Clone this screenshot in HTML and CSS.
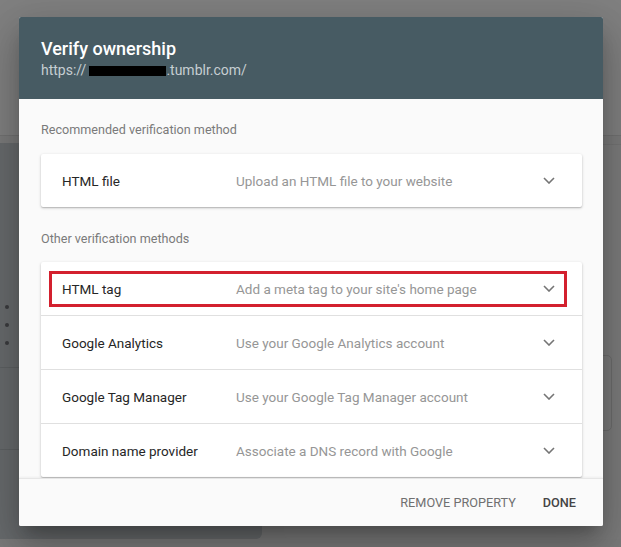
FILE: index.html
```html
<!DOCTYPE html>
<html lang="en">
<head>
<meta charset="utf-8">
<title>Verify ownership</title>
<link rel="stylesheet" href="styles.css">
</head>
<body>
<div class="page">
  <div class="page-top"></div>
  <div class="page-main">
    <div class="page-left">
      <ul class="bullets"><li></li><li></li><li></li></ul>
      <div class="page-left-row"><span class="ghost">E</span></div>
    </div>
    <div class="page-right">
      <div class="page-right-box"></div>
    </div>
  </div>
</div>

<div class="dialog" role="dialog" aria-labelledby="dlg-title">
  <header class="dialog-head">
    <h1 id="dlg-title" class="dialog-title">Verify ownership</h1>
    <div class="dialog-url">https://<span class="redact"></span>.tumblr.com/</div>
  </header>

  <div class="dialog-body">
    <div class="section-label">Recommended verification method</div>
    <div class="card">
      <div class="row">
        <span class="row-name">HTML file</span>
        <span class="row-desc">Upload an HTML file to your website</span>
        <svg class="chev" viewBox="0 0 12 7" width="12" height="7"><polyline points="1,1 6,6 11,1"/></svg>
      </div>
    </div>

    <div class="section-label second">Other verification methods</div>
    <div class="card">
      <div class="row">
        <span class="row-name">HTML tag</span>
        <span class="row-desc">Add a meta tag to your site's home page</span>
        <svg class="chev" viewBox="0 0 12 7" width="12" height="7"><polyline points="1,1 6,6 11,1"/></svg>
        <span class="highlight"></span>
      </div>
      <div class="row">
        <span class="row-name">Google Analytics</span>
        <span class="row-desc">Use your Google Analytics account</span>
        <svg class="chev" viewBox="0 0 12 7" width="12" height="7"><polyline points="1,1 6,6 11,1"/></svg>
      </div>
      <div class="row">
        <span class="row-name">Google Tag Manager</span>
        <span class="row-desc">Use your Google Tag Manager account</span>
        <svg class="chev" viewBox="0 0 12 7" width="12" height="7"><polyline points="1,1 6,6 11,1"/></svg>
      </div>
      <div class="row">
        <span class="row-name">Domain name provider</span>
        <span class="row-desc">Associate a DNS record with Google</span>
        <svg class="chev" viewBox="0 0 12 7" width="12" height="7"><polyline points="1,1 6,6 11,1"/></svg>
      </div>
    </div>
  </div>

  <footer class="dialog-foot">
    <button class="btn btn-muted" type="button">Remove property</button>
    <button class="btn btn-done" type="button">Done</button>
  </footer>
</div>
</body>
</html>
```

FILE: styles.css
```css
* { box-sizing: border-box; }

html, body {
  margin: 0;
  padding: 0;
  width: 621px;
  height: 547px;
  overflow: hidden;
  font-family: Roboto, "Liberation Sans", Arial, sans-serif;
  background: #7a7a7a;
}

/* dimmed page behind the dialog */
.page {
  width: 621px;
  height: 547px;
  display: flex;
  flex-direction: column;
  background: #7b7b7b;
}
.page-top {
  height: 136px;
  flex: none;
  background: #808080;
  border-bottom: 1px solid #727272;
}
.page-main {
  flex: 1;
  display: flex;
  gap: 22px;
  padding-bottom: 8px;
}
.page-left {
  width: 262px;
  margin-top: 7px;
  background: #686b6d;
  border-bottom-right-radius: 6px;
  display: flex;
  flex-direction: column;
}
.bullets {
  list-style: none;
  margin: 0;
  padding: 162px 0 0 5px;
  display: flex;
  flex-direction: column;
  gap: 14px;
  height: 225px;
  border-bottom: 1px solid #5e6163;
}
.bullets li {
  width: 4px;
  height: 4px;
  border-radius: 50%;
  background: #3a3c3e;
}
.page-left-row {
  height: 82px;
  border-bottom: 1px solid #5e6163;
  padding: 30px 0 0 40px;
}
.ghost {
  color: #4a4c4e;
  font-size: 13px;
}
.page-right {
  flex: 1;
  margin-top: 8px;
  padding: 210px 9px 0 0;
  display: flex;
  justify-content: flex-end;
  background: #7c7c7c;
  border-bottom-left-radius: 6px;
  border-top: 1px solid #747474;
}
.page-right-box {
  width: 30px;
  height: 76px;
  border: 1px solid #6e6e6e;
  border-radius: 5px;
}

/* dialog */
.dialog {
  position: absolute;
  left: 19px;
  top: 17px;
  width: 584px;
  height: 509px;
  background: #fafafa;
  display: flex;
  flex-direction: column;
  overflow: hidden;
  border-radius: 2px;
  box-shadow: 0 11px 15px -7px rgba(0,0,0,.25), 0 24px 38px 3px rgba(0,0,0,.16), 0 9px 46px 8px rgba(0,0,0,.12);
}
.dialog-head {
  flex: none;
  height: 82px;
  background: #475b63;
  padding: 21px 22px 0;
}
.dialog-title {
  margin: 0;
  font-size: 18px;
  line-height: 22px;
  font-weight: 500;
  color: #ffffff;
}
.dialog-url {
  font-size: 14px;
  line-height: 20px;
  color: #c6ced2;
}
.redact {
  display: inline-block;
  width: 77px;
  height: 10px;
  margin-left: 3px;
  background: #000;
  vertical-align: -1px;
}

.dialog-body {
  flex: 1;
  min-height: 0;
  overflow: hidden;
  padding: 21px 21px 0 22px;
  background: #fafafa;
}
.section-label {
  font-size: 12.6px;
  line-height: 20px;
  color: #7a7a7a;
  margin-bottom: 14px;
}
.section-label.second {
  margin-top: 22px;
  margin-bottom: 13px;
}
.card {
  background: #ffffff;
  border-radius: 2px;
  box-shadow: 0 1px 3px rgba(0,0,0,.22), 0 1px 1px rgba(0,0,0,.12);
}
.row {
  position: relative;
  height: 54px;
  display: flex;
  align-items: center;
  padding: 0 27px 0 21px;
  border-top: 1px solid #e0e0e0;
}
.row:first-child {
  height: 53px;
  border-top: 0;
}
.row-name {
  width: 174px;
  flex: none;
  font-size: 13.5px;
  color: #262626;
}
.row-desc {
  flex: 1;
  font-size: 13.5px;
  color: #969696;
}
.chev {
  flex: none;
  width: 12px;
  height: 7px;
  fill: none;
  stroke: #757575;
  stroke-width: 1.6;
}
.highlight {
  position: absolute;
  left: 8px;
  right: 15px;
  top: 9px;
  bottom: 8px;
  border: 3px solid #d3202e;
  pointer-events: none;
}

.dialog-foot {
  flex: none;
  height: 48px;
  background: #fafafa;
  border-top: 1px solid #e6e6e6;
  box-shadow: 0 -1px 2px rgba(0,0,0,.05);
  display: flex;
  justify-content: flex-end;
  align-items: center;
  gap: 27px;
  padding: 0 27px 0 0;
  position: relative;
}
.btn {
  border: 0;
  background: none;
  padding: 0;
  font-family: inherit;
  font-size: 12.7px;
  text-transform: uppercase;
  cursor: pointer;
}
.btn-muted {
  color: #707070;
  font-weight: 400;
}
.btn-done {
  color: #444444;
  font-weight: 500;
}
```
